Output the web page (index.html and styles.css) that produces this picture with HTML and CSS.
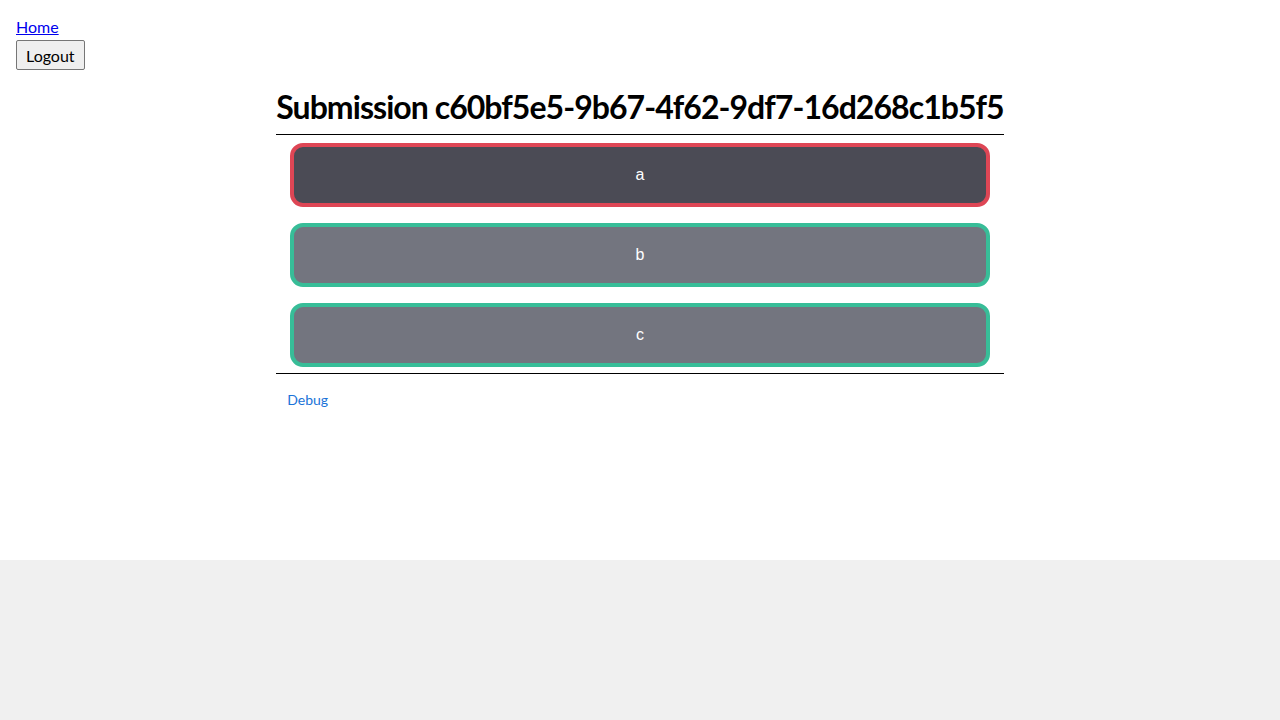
FILE: index.html
```html
<!DOCTYPE html>
<html lang="en">
<head>
<meta charset="utf-8">
<title>Submission</title>
<link rel="stylesheet" href="styles.css">
</head>
<body>
<div class="page">
  <nav class="nav">
    <a class="home" href="#">Home</a>
    <button class="logout" type="button">Logout</button>
  </nav>
  <main class="main">
    <section class="submission">
      <h1 class="title">Submission c60bf5e5-9b67-4f62-9df7-16d268c1b5f5</h1>
      <div class="answers">
        <div class="answer wrong">a</div>
        <div class="answer right">b</div>
        <div class="answer right">c</div>
      </div>
      <a class="debug" href="#">Debug</a>
    </section>
  </main>
</div>
</body>
</html>
```
FILE: styles.css
```css
html {
  background: #f0f0f0;
}
body {
  margin: 0;
  font-family: Lato, "Open Sans", sans-serif;
}
.page {
  background: #ffffff;
  height: 560px;
  box-sizing: border-box;
  padding: 18px 16px 0;
}
.nav {
  display: flex;
  flex-direction: column;
  align-items: flex-start;
  gap: 4px;
}
.home {
  color: #0000ee;
  font-size: 16px;
  line-height: 18px;
}
.logout {
  font-family: inherit;
  font-size: 16px;
  height: 30px;
  padding: 0 9px;
  background: #efefef;
  border: 1px solid #767676;
  border-radius: 2px;
  color: #000;
}
.main {
  display: flex;
  justify-content: center;
}
.submission {
  display: flex;
  flex-direction: column;
}
.title {
  margin: 17px 0 0;
  font-size: 32px;
  font-weight: 700;
  letter-spacing: -0.95px;
  line-height: 40px;
  padding-bottom: 7px;
  border-bottom: 1px solid #000;
  white-space: nowrap;
}
.answers {
  display: flex;
  flex-direction: column;
  align-items: center;
  gap: 16px;
  padding: 8px 0 6px;
  border-bottom: 1px solid #000;
}
.answer {
  width: 700px;
  height: 64px;
  box-sizing: border-box;
  border: 4px solid;
  border-radius: 13px;
  display: flex;
  align-items: center;
  justify-content: center;
  color: #ffffff;
  font-family: "Liberation Sans", Arial, sans-serif;
  font-size: 16px;
}
.answer.wrong {
  background: #4b4b55;
  border-color: #de4655;
}
.answer.right {
  background: #73757f;
  border-color: #38bd98;
}
.debug {
  align-self: flex-start;
  margin: 17px 0 0 11px;
  color: #1a73d8;
  font-size: 14px;
  text-decoration: none;
}
```
